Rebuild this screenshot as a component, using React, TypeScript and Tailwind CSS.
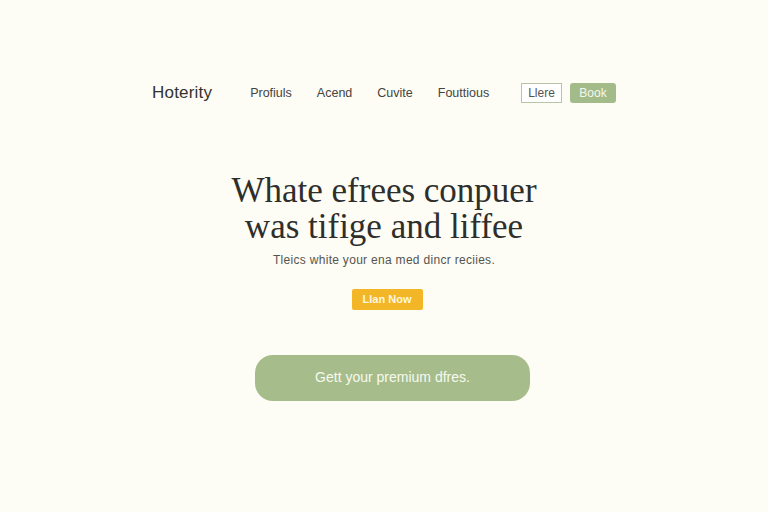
export default function App() {
  const links = ["Profiuls", "Acend", "Cuvite", "Fouttious"];

  return (
    <div className="min-h-[512px] w-full bg-[#fdfcf5] font-['Liberation_Sans',sans-serif] text-[#3a3a36]">
      <nav className="mx-auto flex w-[464px] items-center pt-[80px]">
        <span className="text-[17px] tracking-[0.2px] text-[#33332f]">Hoterity</span>
        <div className="ml-[38px] flex gap-[25px] text-[12.5px] text-[#44443f]">
          {links.map((l) => (
            <a key={l} href="#" className="leading-none">
              {l}
            </a>
          ))}
        </div>
        <div className="ml-auto flex gap-[8px] text-[12px]">
          <button className="h-[20px] w-[41px] border border-[#b8c4a6] bg-white text-[#55554f]">
            Llere
          </button>
          <button className="h-[20px] w-[46px] rounded-[3px] bg-[#a3bb88] text-[#f4f7ee]">
            Book
          </button>
        </div>
      </nav>

      <section className="mt-[67px] flex flex-col items-center text-center">
        <h1 className="font-['Liberation_Serif',serif] text-[35px] leading-[36px] text-[#2e2e2b]">
          Whate efrees conpuer
          <br />
          was tifige and liffee
        </h1>
        <p className="mt-[6px] text-[12px] tracking-[0.3px] text-[#55554f]">
          Tleics white your ena med dincr reciies.
        </p>
        <button className="ml-[6px] mt-[20px] h-[21px] w-[71px] rounded-[2px] bg-[#f2b626] text-[11px] font-bold text-[#fff7df]">
          Llan Now
        </button>
        <button className="ml-[17px] mt-[45px] h-[46px] w-[275px] rounded-[18px] bg-[#a6bd8b] text-[14px] text-[#f7f9f0]">
          Gett your premium dfres.
        </button>
      </section>
    </div>
  );
}
